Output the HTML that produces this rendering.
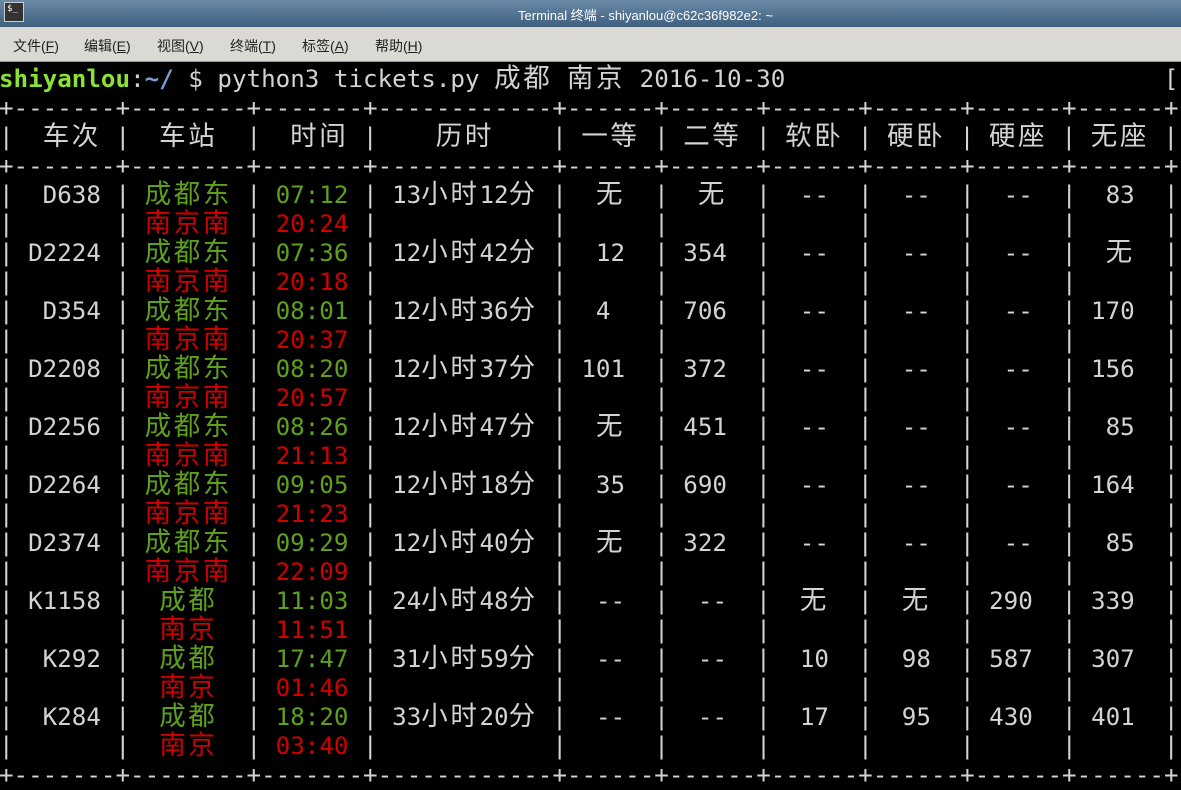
<!DOCTYPE html>
<html><head><meta charset="utf-8"><style>
html,body{margin:0;padding:0;width:1181px;height:787px;overflow:hidden;background:#000;}
#tb{position:absolute;left:0;top:0;width:1181px;height:27px;background:linear-gradient(#6a8aa8,#3f5f7e);}
#tb .t{position:absolute;left:0;width:1181px;top:5px;text-align:center;color:#fff;font:13px "Liberation Sans","Noto Sans CJK SC",sans-serif;padding-left:110px;box-sizing:border-box}
#ic{position:absolute;left:4px;top:2px;width:20px;height:20px;background:#333;border:1px solid #ccc;box-sizing:border-box;color:#fff;font:9px "DejaVu Sans Mono",monospace;line-height:12px;padding-left:2px}
#mb{position:absolute;left:0;top:27px;width:1181px;height:34px;background:#dbd9d3;border-bottom:1px solid #9a9890;font:14px "Liberation Sans","Noto Sans CJK SC",sans-serif;color:#222}
#mb span{position:absolute;top:9px}
pre{position:absolute;left:-1px;top:65px;margin:0;font-family:"DejaVu Sans Mono",monospace;font-size:24.2px;line-height:29px;color:#d3d3d3;white-space:pre}
.c{font-family:"Noto Sans CJK SC",sans-serif;font-size:26.5px;letter-spacing:2.6px;line-height:0}
.g{color:#5ea01e}.r{color:#d00000}
.pg{color:#8ae234;font-weight:bold}.pb{color:#729fcf;font-weight:bold}
</style></head><body>
<div id="tb"><div id="ic">$_</div><div class="t">Terminal 终端 - shiyanlou@c62c36f982e2: ~</div></div>
<div id="mb"><span style="left:13px">文件(<u>F</u>)</span><span style="left:84px">编辑(<u>E</u>)</span><span style="left:157px">视图(<u>V</u>)</span><span style="left:230px">终端(<u>T</u>)</span><span style="left:302px">标签(<u>A</u>)</span><span style="left:375px">帮助(<u>H</u>)</span></div>
<pre><span class="pg">shiyanlou</span>:<span class="pb">~/</span> $ python3 tickets.py <span class="c">成都</span> <span class="c">南京</span> 2016-10-30                          [
+-------+--------+-------+------------+------+------+------+------+------+------+
|  <span class="c">车次</span> |  <span class="c">车站</span>  |  <span class="c">时间</span> |    <span class="c">历时</span>    | <span class="c">一等</span> | <span class="c">二等</span> | <span class="c">软卧</span> | <span class="c">硬卧</span> | <span class="c">硬座</span> | <span class="c">无座</span> |
+-------+--------+-------+------------+------+------+------+------+------+------+
|  D638 | <span class="c g">成都东</span> | <span class="g">07:12</span> | 13<span class="c">小时</span>12<span class="c">分</span> |  <span class="c">无</span>  |  <span class="c">无</span>  |  --  |  --  |  --  |  83  |
|       | <span class="c r">南京南</span> | <span class="r">20:24</span> |            |      |      |      |      |      |      |
| D2224 | <span class="c g">成都东</span> | <span class="g">07:36</span> | 12<span class="c">小时</span>42<span class="c">分</span> |  12  | 354  |  --  |  --  |  --  |  <span class="c">无</span>  |
|       | <span class="c r">南京南</span> | <span class="r">20:18</span> |            |      |      |      |      |      |      |
|  D354 | <span class="c g">成都东</span> | <span class="g">08:01</span> | 12<span class="c">小时</span>36<span class="c">分</span> |  4   | 706  |  --  |  --  |  --  | 170  |
|       | <span class="c r">南京南</span> | <span class="r">20:37</span> |            |      |      |      |      |      |      |
| D2208 | <span class="c g">成都东</span> | <span class="g">08:20</span> | 12<span class="c">小时</span>37<span class="c">分</span> | 101  | 372  |  --  |  --  |  --  | 156  |
|       | <span class="c r">南京南</span> | <span class="r">20:57</span> |            |      |      |      |      |      |      |
| D2256 | <span class="c g">成都东</span> | <span class="g">08:26</span> | 12<span class="c">小时</span>47<span class="c">分</span> |  <span class="c">无</span>  | 451  |  --  |  --  |  --  |  85  |
|       | <span class="c r">南京南</span> | <span class="r">21:13</span> |            |      |      |      |      |      |      |
| D2264 | <span class="c g">成都东</span> | <span class="g">09:05</span> | 12<span class="c">小时</span>18<span class="c">分</span> |  35  | 690  |  --  |  --  |  --  | 164  |
|       | <span class="c r">南京南</span> | <span class="r">21:23</span> |            |      |      |      |      |      |      |
| D2374 | <span class="c g">成都东</span> | <span class="g">09:29</span> | 12<span class="c">小时</span>40<span class="c">分</span> |  <span class="c">无</span>  | 322  |  --  |  --  |  --  |  85  |
|       | <span class="c r">南京南</span> | <span class="r">22:09</span> |            |      |      |      |      |      |      |
| K1158 |  <span class="c g">成都</span>  | <span class="g">11:03</span> | 24<span class="c">小时</span>48<span class="c">分</span> |  --  |  --  |  <span class="c">无</span>  |  <span class="c">无</span>  | 290  | 339  |
|       |  <span class="c r">南京</span>  | <span class="r">11:51</span> |            |      |      |      |      |      |      |
|  K292 |  <span class="c g">成都</span>  | <span class="g">17:47</span> | 31<span class="c">小时</span>59<span class="c">分</span> |  --  |  --  |  10  |  98  | 587  | 307  |
|       |  <span class="c r">南京</span>  | <span class="r">01:46</span> |            |      |      |      |      |      |      |
|  K284 |  <span class="c g">成都</span>  | <span class="g">18:20</span> | 33<span class="c">小时</span>20<span class="c">分</span> |  --  |  --  |  17  |  95  | 430  | 401  |
|       |  <span class="c r">南京</span>  | <span class="r">03:40</span> |            |      |      |      |      |      |      |
+-------+--------+-------+------------+------+------+------+------+------+------+</pre>
</body></html>
